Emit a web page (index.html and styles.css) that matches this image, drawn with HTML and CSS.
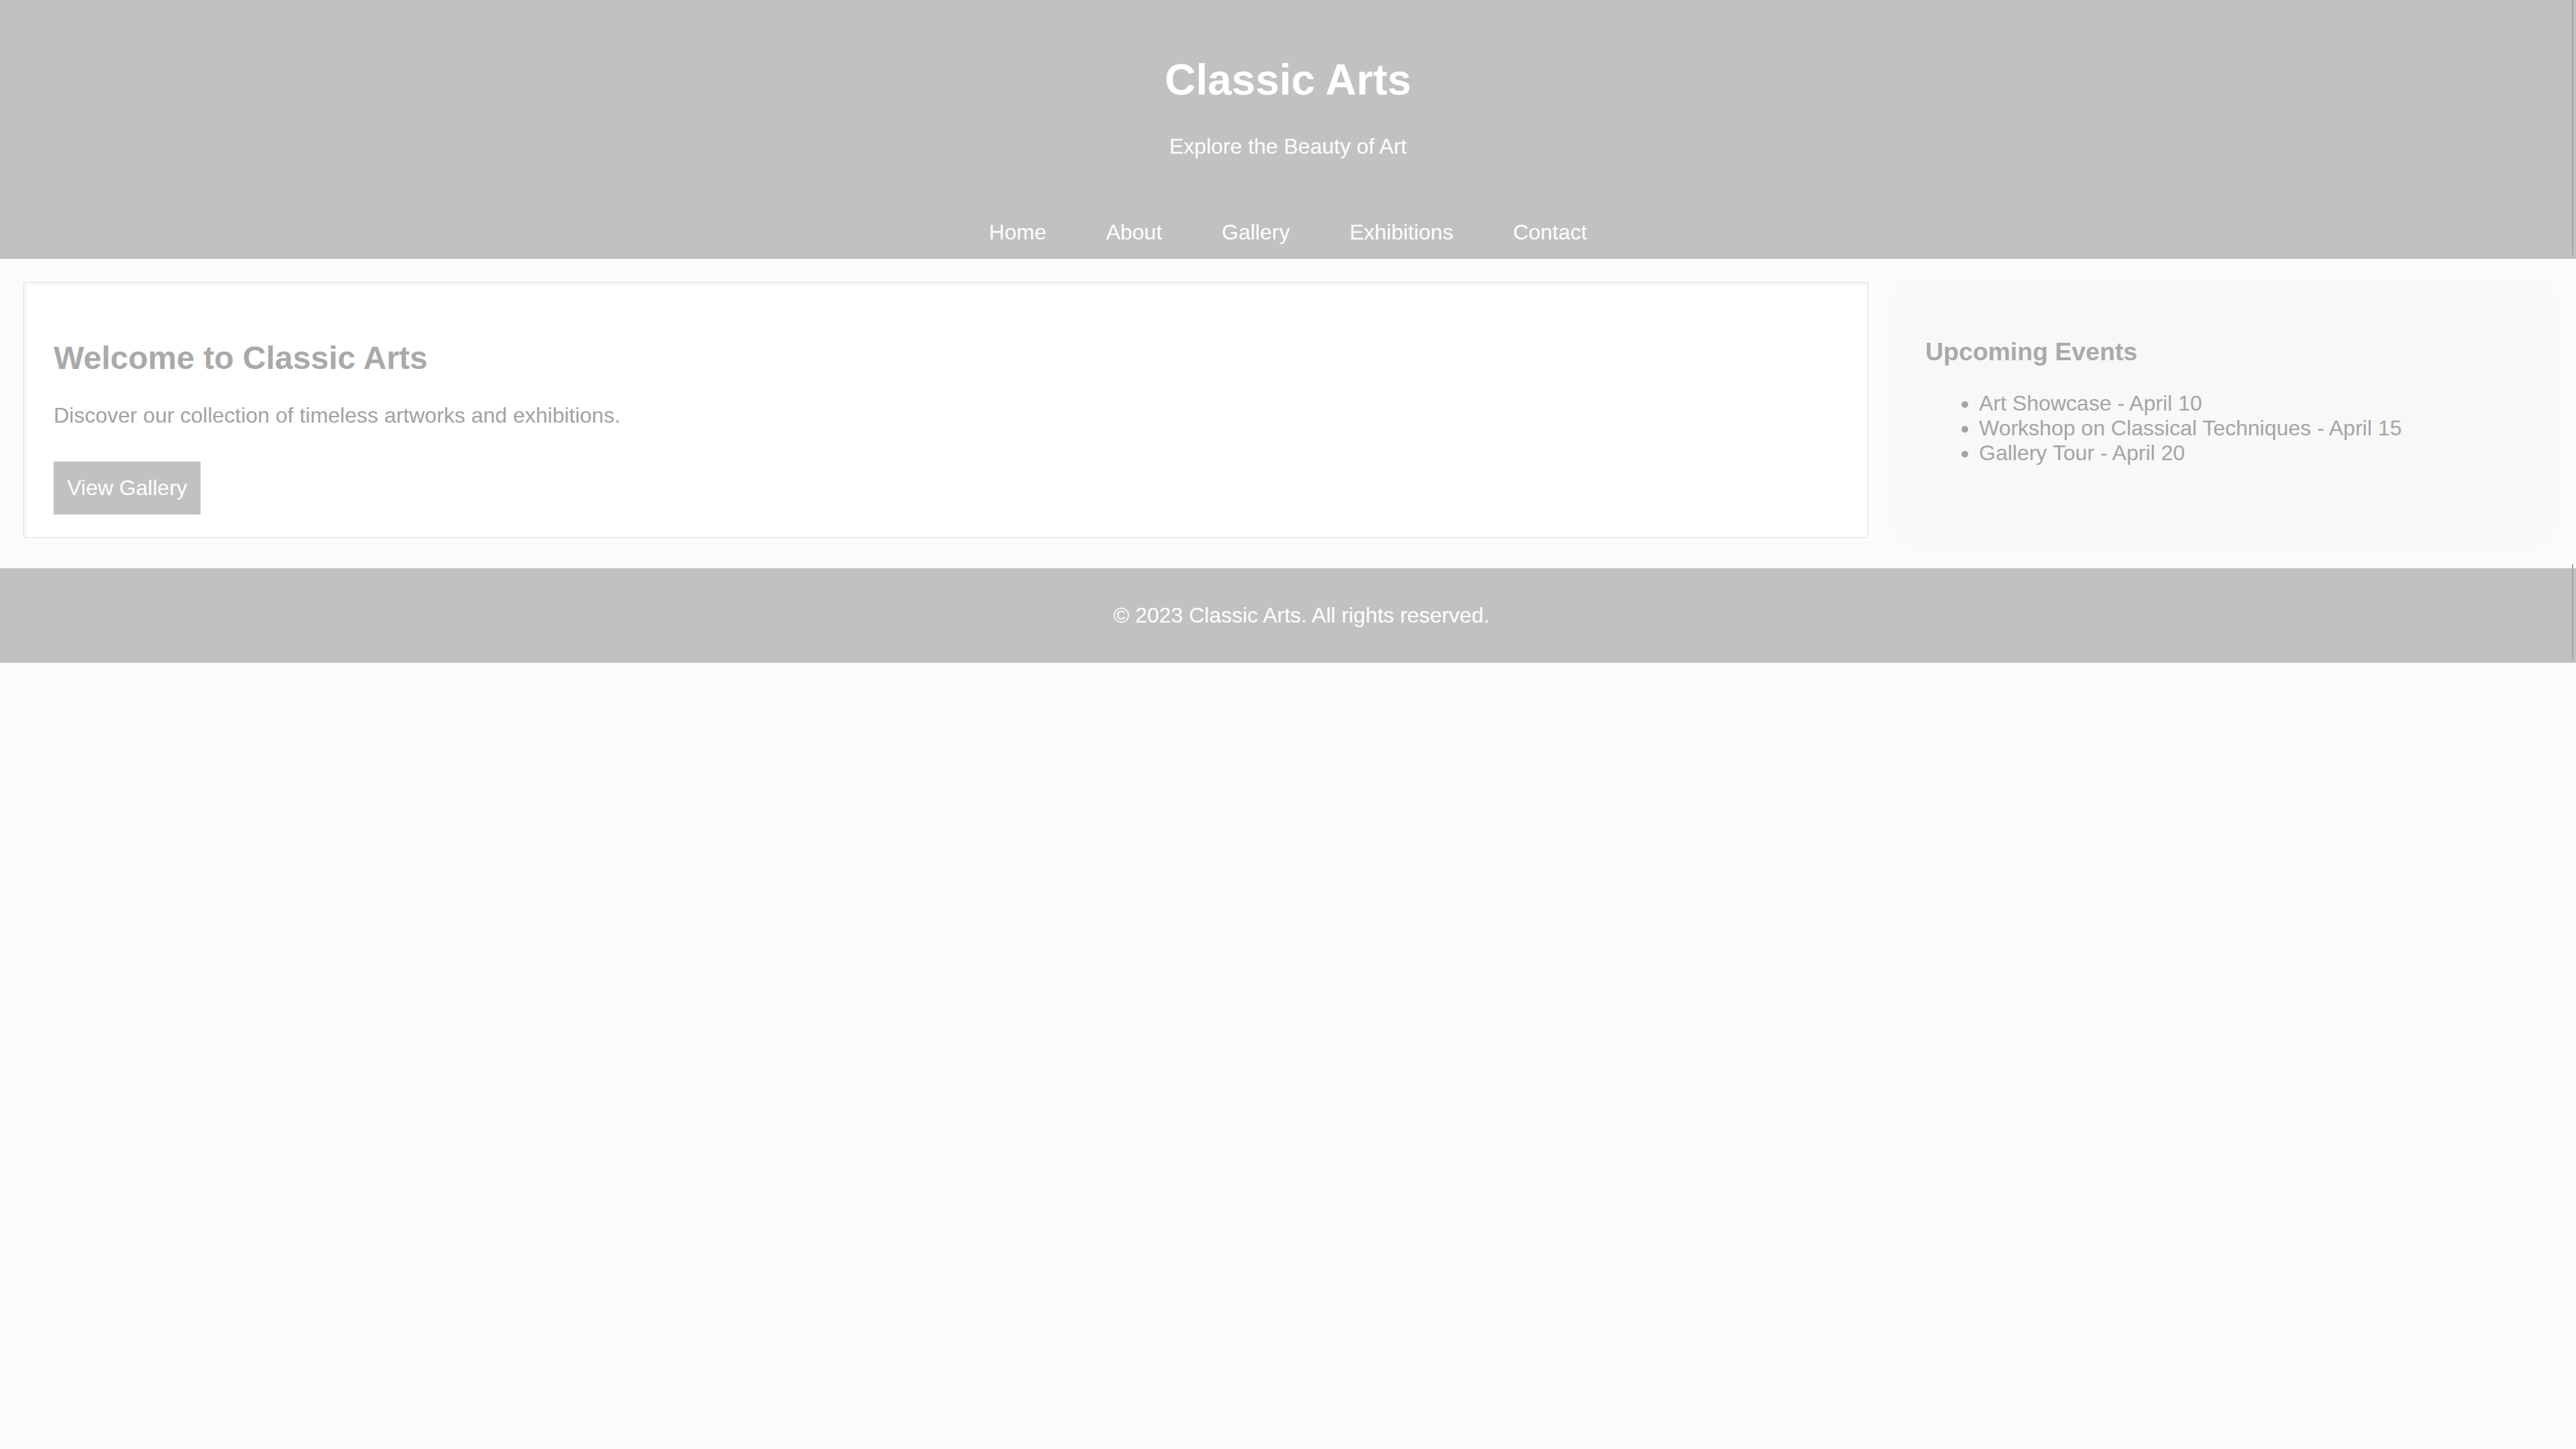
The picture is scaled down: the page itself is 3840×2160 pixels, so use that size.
FILE: index.html
```html
<!DOCTYPE html>
<html lang="en">
<head>
<meta charset="utf-8">
<title>Classic Arts</title>
<link rel="stylesheet" href="styles.css">
</head>
<body>
<header class="site-header">
  <h1 class="site-title">Classic Arts</h1>
  <p class="site-tagline">Explore the Beauty of Art</p>
  <nav class="site-nav">
    <a class="nav-link" href="#">Home</a>
    <a class="nav-link" href="#">About</a>
    <a class="nav-link" href="#">Gallery</a>
    <a class="nav-link" href="#">Exhibitions</a>
    <a class="nav-link" href="#">Contact</a>
  </nav>
</header>
<main class="main">
  <section class="card">
    <h2 class="card-title">Welcome to Classic Arts</h2>
    <p class="card-text">Discover our collection of timeless artworks and exhibitions.</p>
    <a class="btn" href="#">View Gallery</a>
  </section>
  <aside class="sidebar">
    <h3 class="sidebar-title">Upcoming Events</h3>
    <ul class="events">
      <li>Art Showcase - April 10</li>
      <li>Workshop on Classical Techniques - April 15</li>
      <li>Gallery Tour - April 20</li>
    </ul>
  </aside>
</main>
<footer class="site-footer">
  <p class="footer-text">&copy; 2023 Classic Arts. All rights reserved.</p>
</footer>
</body>
</html>
```
FILE: styles.css
```css
html, body {
  margin: 0;
  padding: 0;
}
body {
  background: #fbfbfb;
  font-family: "Liberation Sans", Arial, sans-serif;
  color: #a3a3a3;
}
.site-header {
  position: relative;
  background: #c1c1c1;
  color: #ffffff;
  text-align: center;
  padding: 40px 40px 1px;
}
.site-header::after,
.site-footer::after {
  content: "";
  position: absolute;
  right: 4px;
  width: 2px;
  background: #a6a6a6;
}
.site-header::after {
  top: 0;
  bottom: 5px;
}
.site-footer::after {
  top: -6px;
  bottom: 5px;
}
.site-title {
  font-size: 64px;
  font-weight: bold;
  margin: 43px 0;
  line-height: 1.15;
}
.site-tagline {
  font-size: 32px;
  margin: 0;
  line-height: 1.15;
}
.site-nav {
  display: flex;
  justify-content: center;
  gap: 89px;
  margin-top: 72px;
}
.nav-link {
  color: #ffffff;
  text-decoration: none;
  font-size: 32px;
  line-height: 1.15;
  padding: 20px 0;
}
.main {
  display: flex;
  gap: 40px;
  padding: 40px;
  align-items: stretch;
}
.card {
  position: relative;
  flex: 0 0 2750px;
  box-sizing: border-box;
  background: #ffffff;
  padding: 40px;
  box-shadow: 0 0 8px rgba(0, 0, 0, 0.025);
}
.card::before {
  content: "";
  position: absolute;
  top: -5px;
  left: -5px;
  right: 5px;
  bottom: 5px;
  border: 1px solid #dcdcdc;
  pointer-events: none;
}
.card-title {
  font-size: 48px;
  font-weight: bold;
  color: #a9a9a9;
  margin: 40px 0;
  line-height: 1.15;
}
.card-text {
  font-size: 32px;
  margin: 0;
  line-height: 1.15;
  color: #a2a2a2;
}
.btn {
  display: inline-block;
  margin-top: 50px;
  background: #c1c1c1;
  color: #ffffff;
  text-decoration: none;
  font-size: 32px;
  line-height: 1.15;
  padding: 21px 20px;
}
.sidebar {
  flex: 1 1 auto;
  box-sizing: border-box;
  background: #f8f8f8;
  border-radius: 20px;
  padding: 40px;
  box-shadow: 0 0 24px rgba(0, 0, 0, 0.035);
}
.sidebar-title {
  font-size: 37.44px;
  font-weight: bold;
  color: #a9a9a9;
  margin: 37px 0;
  line-height: 1.15;
}
.events {
  margin: 0;
  padding-left: 80px;
  font-size: 32px;
  line-height: 1.15;
  color: #a4a4a4;
}
.site-footer {
  position: relative;
  background: #c1c1c1;
  color: #ffffff;
  text-align: center;
  padding: 52px 0 52px 40px;
}
.footer-text {
  margin: 0;
  font-size: 32px;
  line-height: 1.15;
}
```
